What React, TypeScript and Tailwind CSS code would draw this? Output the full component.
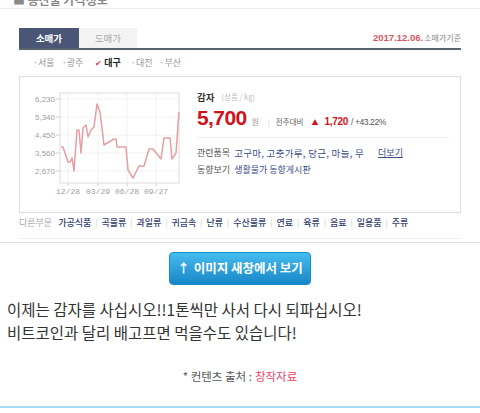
const kr = "font-['Noto_Sans_CJK_KR',sans-serif]";
const num = "font-['Liberation_Sans','Noto_Sans_CJK_KR',sans-serif]";

const regions = ["서울", "광주", "대구", "대전", "부산"];
const others = ["가공식품", "곡물류", "과일류", "귀금속", "난류", "수산물류", "연료", "육류", "음료", "일용품", "주류"];

const points =
  "61,147 63,147 68,162 70,162 72,158 74,171 77,130 79,130 81,153 83,128 86,125 88,137 91,130 94,127 97,104 100,112 104,145 114,139 116,139 117,147 126,147 128,170 133,178 139,166 144,166 149,149 153,149 161,159 164,138 170,138 172,159 176,153 179,112";

function PriceChart() {
  const yTicks = [
    { y: 99, label: "6,230" },
    { y: 117, label: "5,340" },
    { y: 135, label: "4,450" },
    { y: 153, label: "3,560" },
    { y: 171, label: "2,670" },
  ];
  const xTicks = [
    { x: 68, label: "12/28" },
    { x: 98, label: "03/29" },
    { x: 127, label: "06/28" },
    { x: 156, label: "09/27" },
  ];
  return (
    <svg width="170" height="135" viewBox="20 77 170 135" className="shrink-0">
      {yTicks.map((t) => (
        <g key={t.label}>
          <line x1="60" x2="179" y1={t.y} y2={t.y} stroke="#f2f2f2" />
          <line x1="56" x2="60" y1={t.y} y2={t.y} stroke="#ccc" />
          <text x="55" y={t.y + 3} textAnchor="end" fontSize="8" fill="#a0a0a0" fontFamily="Liberation Sans, sans-serif">
            {t.label}
          </text>
        </g>
      ))}
      {xTicks.map((t) => (
        <g key={t.label}>
          <line x1={t.x} x2={t.x} y1="93" y2="183" stroke="#f2f2f2" />
          <line x1={t.x} x2={t.x} y1="183" y2="186" stroke="#ccc" />
          <text x={t.x} y="194" textAnchor="middle" fontSize="8" fill="#a0a0a0" fontFamily="Liberation Mono, monospace">
            {t.label}
          </text>
        </g>
      ))}
      <rect x="60" y="93" width="119" height="90" fill="none" stroke="#dcdcdc" />
      <polyline points={points} fill="none" stroke="#e79ea3" strokeWidth="1.5" strokeLinejoin="round" />
    </svg>
  );
}

export default function App() {
  return (
    <div className={`w-[480px] h-[413px] bg-white overflow-hidden ${kr}`}>
      {/* captured price widget */}
      <section className="h-[243px] border-b border-[#dedede]">
        <div className="h-[9px] border-b border-[#eeeeee]">
          <div className="h-[12px] overflow-hidden pl-[13px]">
            <div className="mt-[-8px] text-[12px] leading-[16px] font-bold text-[#8a8a8a]">■ 농산물 가격정보</div>
          </div>
        </div>

        <div className="px-[19px] pt-[19px]">
          <div className="flex h-[22px] border-b-2 border-[#5b636e]">
            <div className="w-[60px] h-[20px] bg-[#4b5677] text-white text-[9.5px] font-bold flex items-center justify-center">
              소매가
            </div>
            <div className="w-[58px] h-[20px] bg-[#f3f3f3] text-[#aaa] text-[9.5px] flex items-center justify-center">
              도매가
            </div>
            <div className="ml-auto h-[20px] flex items-center gap-[1px]">
              <span className={`${num} text-[9.5px] font-bold text-[#d9555d]`}>2017.12.06.</span>
              <span className="text-[8px] text-[#888]">소매가기준</span>
            </div>
          </div>

          <div className="h-[26px] flex items-center pl-[14px] gap-[7px] text-[9px] text-[#999]">
            {regions.map((r) =>
              r === "대구" ? (
                <span key={r} className="flex items-center ml-[5px] mr-[3px]">
                  <span className="text-[#e0404a] text-[8px] mr-[2px]">✔</span>
                  <span className="font-bold text-[#222]">{r}</span>
                </span>
              ) : (
                <span key={r}>·{r}</span>
              )
            )}
          </div>

          <div className="h-[137px] border border-[#dddddd] flex">
            <PriceChart />
            <div className="pl-[7px] pt-[13px]">
              <div className="h-[14px] flex items-center gap-[7px]">
                <span className="text-[9.5px] font-bold text-[#333]">감자</span>
                <span className="text-[7.5px] text-[#c0c0c0]">(상품 / kg)</span>
              </div>
              <div className="mt-[2px] h-[24px] flex items-baseline whitespace-nowrap">
                <span className={`${num} text-[21px] font-bold text-[#d0121b] tracking-[-0.6px] leading-[24px]`}>5,700</span>
                <span className="ml-[5px] text-[8px] text-[#999]">원</span>
                <span className="ml-[9px] text-[7px] text-[#ccc]">|</span>
                <span className="ml-[6px] text-[7.5px] text-[#666]">전주대비</span>
                <span className="ml-[8px] text-[7px] text-[#d0121b]">▲</span>
                <span className={`${num} ml-[6px] text-[10px] font-bold text-[#d0121b] tracking-[-0.3px]`}>1,720</span>
                <span className={`${num} ml-[3px] text-[8.5px] text-[#555] tracking-[-0.4px]`}>/ +43.22%</span>
              </div>
              <div className="h-[8px] w-[252px] border-b border-[#eeeeee]" />
              <div className="mt-[8px] h-[14px] flex items-center text-[9px] whitespace-nowrap">
                <span className="text-[#555]">관련품목</span>
                <span className="ml-[4px] text-[#3d4c8c] text-[9.5px] tracking-[0.3px]">고구마, 고춧가루, 당근, 마늘, 무</span>
                <span className="ml-[14px] text-[#3d4c8c] underline">더보기</span>
              </div>
              <div className="mt-[3px] h-[14px] flex items-center text-[9px] whitespace-nowrap">
                <span className="text-[#555]">동향보기</span>
                <span className="ml-[4px] text-[#3d4c8c]">생활물가 동향게시판</span>
              </div>
            </div>
          </div>

          <div className="h-[26px] border-b border-[#eeeeee] flex items-start pt-[4px] text-[9px] leading-[12px] whitespace-nowrap">
            <span className="text-[#aaa] mr-[6px]">다른부문</span>
            {others.map((o, i) => (
              <span key={o} className="flex items-center">
                {i > 0 && <span className="mx-[4px] text-[#ccc] text-[8px]">|</span>}
                <span className="text-[#34406e] font-medium">{o}</span>
              </span>
            ))}
          </div>
        </div>
      </section>

      <div className="flex justify-center pt-[9px]">
        <button className="w-[142px] h-[33px] rounded-[4px] bg-gradient-to-b from-[#45bcee] to-[#1787c8] border border-[#1a8ac9] text-white text-[12.5px] font-bold flex items-center justify-center gap-[4px]">
          <span>↑</span>
          <span>이미지 새창에서 보기</span>
        </button>
      </div>

      <div className="mt-[13px] px-[7px] text-[15.5px] leading-[23px] text-[#333]">
        <p>이제는 감자를 사십시오!!1톤씩만 사서 다시 되파십시오!</p>
        <p>비트코인과 달리 배고프면 먹을수도 있습니다!</p>
      </div>

      <div className="mt-[25px] h-[16px] flex justify-center items-center text-[11.5px] text-[#555]">
        <span>* 컨텐츠 출처 : </span>
        <span className="ml-[3px] text-[#e8436a]">창작자료</span>
      </div>

      <div className="mt-[21px] border-b-2 border-[#a9dcf4]" />
    </div>
  );
}
